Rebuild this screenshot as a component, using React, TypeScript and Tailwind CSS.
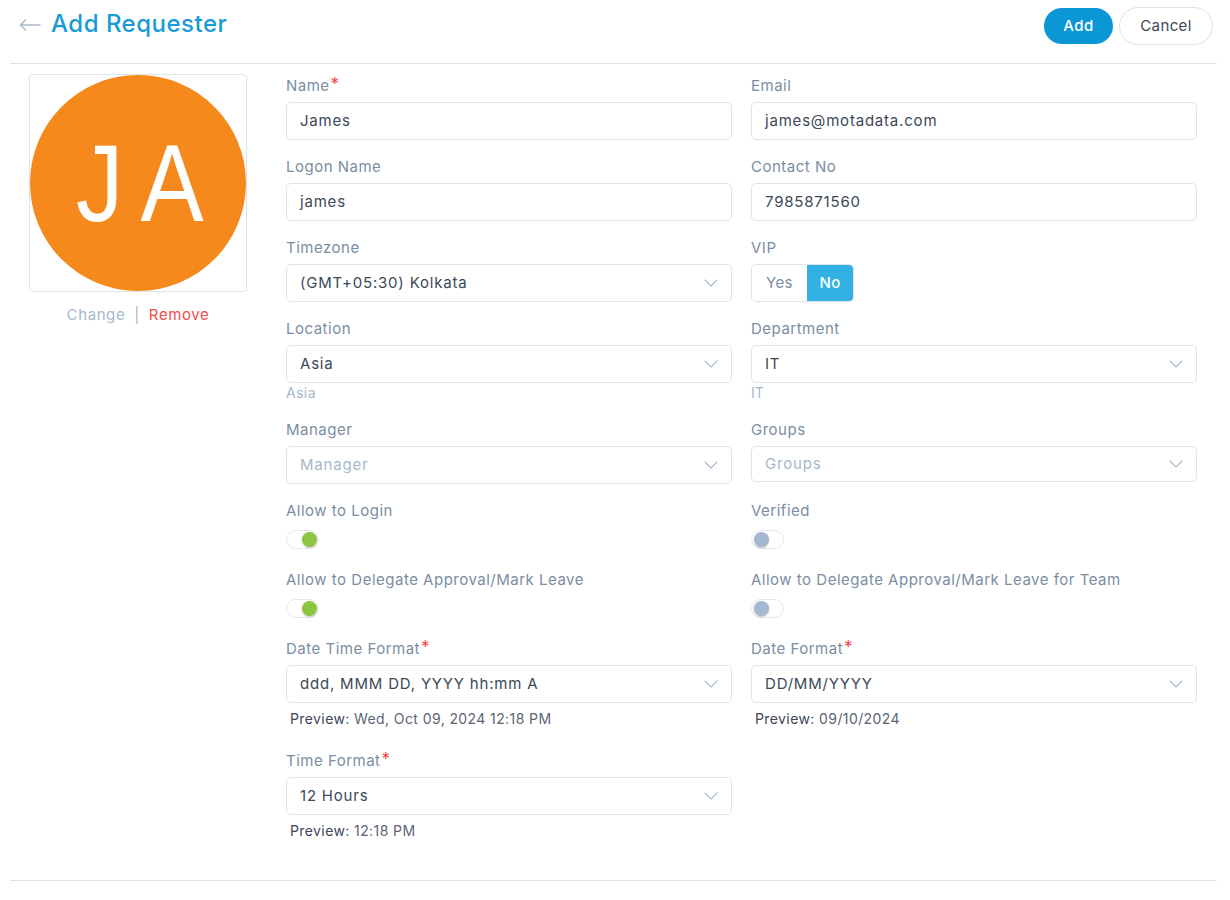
import React from "react";

const FONT = { fontFamily: "Inter, 'Noto Sans', sans-serif" };

function Chevron() {
  return (
    <svg width="14" height="8" viewBox="0 0 14 8" fill="none" className="shrink-0">
      <path d="M1 1l6 6 6-6" stroke="#a9b9cd" strokeWidth="1.1" strokeLinecap="round" strokeLinejoin="round" />
    </svg>
  );
}

function Label({ text, required }: { text: string; required?: boolean }) {
  return (
    <div className="h-[22px] leading-[22px] text-[15px] tracking-[0.5px] text-[#7b8da4] mb-[5px] flex">
      <span>{text}</span>
      {required && <span className="text-[#f04646] text-[17px] leading-[18px] ml-[1px]">*</span>}
    </div>
  );
}

function Input({ value, placeholder, h = "h-[38px]" }: { value?: string; placeholder?: string; h?: string }) {
  return (
    <div className={`${h} rounded-[5px] border border-[#dee4ec] bg-white px-[13px] flex items-center text-[15px] tracking-[0.8px]`}>
      {value ? <span className="text-[#3b4858] pt-[1px]">{value}</span> : <span className="text-[#a6b7cc]">{placeholder}</span>}
    </div>
  );
}

function Select({ value, placeholder, h = "h-[38px]" }: { value?: string; placeholder?: string; h?: string }) {
  return (
    <div className={`${h} rounded-[5px] border border-[#dee4ec] bg-white pl-[13px] pr-[13px] flex items-center justify-between text-[15px] tracking-[0.8px]`}>
      {value ? <span className="text-[#3b4858] pt-[1px]">{value}</span> : <span className="text-[#a6b7cc]">{placeholder}</span>}
      <Chevron />
    </div>
  );
}

function Toggle({ on }: { on?: boolean }) {
  return (
    <div className="h-[26px] pt-[3px]">
      <div className="relative w-[33px] h-[19px] rounded-full border border-[#e4e9ef] bg-white">
        <div
          className={`absolute top-[1px] w-[15px] h-[15px] rounded-full shadow-[0_1px_2px_rgba(0,0,0,0.25)] ${
            on ? "left-[15px] bg-[#8cc63e]" : "left-[2px] bg-[#a6b8d1]"
          }`}
        />
      </div>
    </div>
  );
}

function Preview({ value }: { value: string }) {
  return (
    <div className="h-[31px] pt-[6px] pl-[4px] leading-[20px] text-[14px] tracking-[0.4px]">
      <span className="text-[#3b4656]">Preview: </span>
      <span className="text-[#5b6574]">{value}</span>
    </div>
  );
}

export default function App() {
  return (
    <div style={FONT} className="w-[1230px] min-h-[900px] bg-white">
      <div className="mx-[10px] w-[1207px]">
        {/* Header */}
        <div className="h-[64px] border-b border-[#dfe3ea] flex items-start justify-between">
          <div className="flex items-center pl-[9px] pt-[7px] h-[34px] box-content">
            <svg width="22" height="12" viewBox="0 0 22 12" fill="none" className="mt-[2px]">
              <path d="M21 6H1.5M6.5 1L1.5 6l5 5" stroke="#a9b9cd" strokeWidth="1.5" strokeLinecap="round" strokeLinejoin="round" />
            </svg>
            <span className="ml-[10px] text-[24px] font-medium text-[#1a9ad6] tracking-[0.5px]">Add Requester</span>
          </div>
          <div className="flex items-center gap-[6px] pt-[7px] pr-[4px]">
            <button className="h-[36px] w-[69px] rounded-full bg-[#0b96d6] text-white text-[15px] font-medium tracking-[0.4px]">Add</button>
            <button className="h-[38px] w-[94px] rounded-full border border-[#dde3ea] bg-white text-[#3c4858] text-[15px] tracking-[0.4px]">
              Cancel
            </button>
          </div>
        </div>

        {/* Body */}
        <div className="flex h-[817px] border-b border-[#dfe3ea]">
          <div className="w-[276px] shrink-0 pt-[10px]">
            <div className="ml-[19px] w-[218px] h-[218px] rounded-[4px] border border-[#dfe4ea] bg-white flex items-center justify-center overflow-hidden">
              <div className="w-[216px] h-[216px] rounded-full bg-[#f5891c] flex items-center justify-center">
                <span
                  className="text-white text-[110px] leading-none tracking-[20px] pl-[24px] -mt-[1px] scale-x-[0.86]"
                  style={{ fontFamily: "'Liberation Sans', Arial, sans-serif" }}
                >
                  JA
                </span>
              </div>
            </div>
            <div className="ml-[19px] w-[218px] mt-[12px] flex justify-center items-center text-[15px] tracking-[0.6px]">
              <span className="text-[#a6b9d0]">Change</span>
              <span className="text-[#a6b9d0] mx-[9px]">|</span>
              <span className="text-[#f04b48]">Remove</span>
            </div>
          </div>

          <div className="w-[911px] pt-[11px] grid grid-cols-2 gap-x-[19px] content-start">
            {/* Left column */}
            <div className="flex flex-col gap-y-[16px]">
              <div>
                <Label text="Name" required />
                <Input value="James" />
              </div>
              <div>
                <Label text="Logon Name" />
                <Input value="james" />
              </div>
              <div>
                <Label text="Timezone" />
                <Select value="(GMT+05:30) Kolkata" />
              </div>
              <div>
                <Label text="Location" />
                <Select value="Asia" />
                <div className="h-[20px] leading-[20px] text-[14px] tracking-[0.4px] text-[#a6b7cc]">Asia</div>
              </div>
              <div>
                <Label text="Manager" />
                <Select placeholder="Manager" />
              </div>
              <div>
                <Label text="Allow to Login" />
                <Toggle on />
              </div>
              <div>
                <Label text="Allow to Delegate Approval/Mark Leave" />
                <Toggle on />
              </div>
              <div>
                <Label text="Date Time Format" required />
                <Select value="ddd, MMM DD, YYYY hh:mm A" />
                <Preview value="Wed, Oct 09, 2024 12:18 PM" />
              </div>
              <div>
                <Label text="Time Format" required />
                <Select value="12 Hours" />
                <Preview value="12:18 PM" />
              </div>
            </div>

            {/* Right column */}
            <div className="flex flex-col gap-y-[16px]">
              <div>
                <Label text="Email" />
                <Input value="james@motadata.com" />
              </div>
              <div>
                <Label text="Contact No" />
                <Input value="7985871560" />
              </div>
              <div>
                <Label text="VIP" />
                <div className="flex h-[38px] w-[103px] rounded-[5px] border border-[#dee4ec] overflow-hidden text-[15px] tracking-[0.4px]">
                  <div className="w-[55px] flex items-center justify-center text-[#7b8da4] bg-white">Yes</div>
                  <div className="flex-1 flex items-center justify-center bg-[#33b1e4] text-white font-medium">No</div>
                </div>
              </div>
              <div>
                <Label text="Department" />
                <Select value="IT" />
                <div className="h-[20px] leading-[20px] text-[14px] text-[#a6b7cc]">IT</div>
              </div>
              <div className="h-[65px]">
                <Label text="Groups" />
                <Select placeholder="Groups" h="h-[36px]" />
              </div>
              <div>
                <Label text="Verified" />
                <Toggle />
              </div>
              <div>
                <Label text="Allow to Delegate Approval/Mark Leave for Team" />
                <Toggle />
              </div>
              <div>
                <Label text="Date Format" required />
                <Select value="DD/MM/YYYY" />
                <Preview value="09/10/2024" />
              </div>
            </div>
          </div>
        </div>
      </div>
    </div>
  );
}
